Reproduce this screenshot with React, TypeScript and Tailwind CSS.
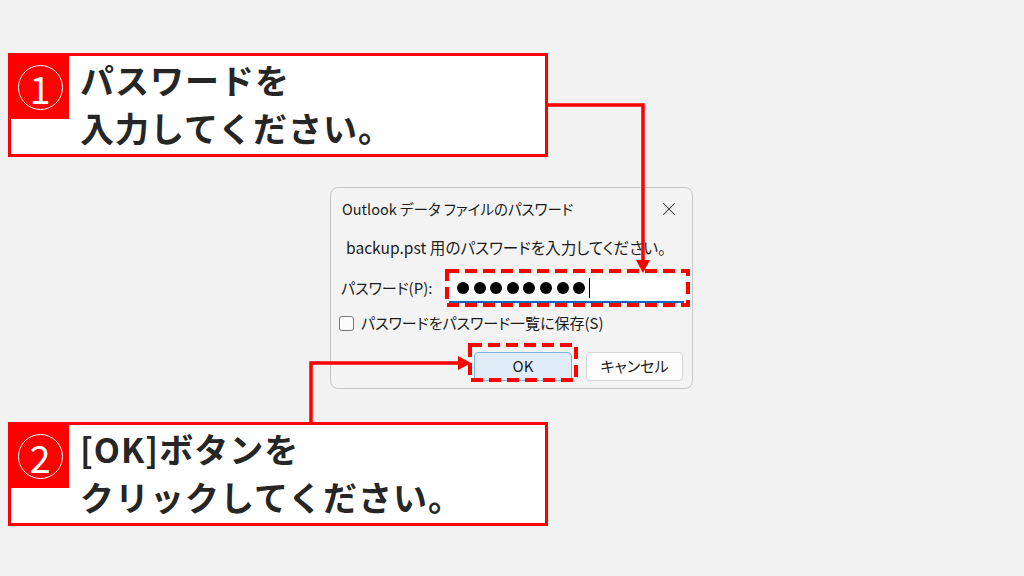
import { X } from "lucide-react";

const jp = "font-['Noto_Sans_CJK_JP',sans-serif]";

function Callout({ num, lines }: { num: string; lines: string[] }) {
  return (
    <div className="flex h-[104px] w-[540px] border-[3px] border-[#ff0000] bg-white">
      <div className="flex h-[63px] w-[58px] shrink-0 items-center justify-center bg-[#ff0000]">
        <div className="flex h-[45px] w-[45px] shrink-0 items-center justify-center rounded-full border-[1.5px] border-white">
          <span className={`${jp} text-[38px] leading-none font-normal text-white`}>{num}</span>
        </div>
      </div>
      <div className={`${jp} pl-[11px] text-[34px] leading-[48px] font-bold tracking-[1px] text-[#262626]`}>
        {lines.map((l) => (
          <div key={l}>{l}</div>
        ))}
      </div>
    </div>
  );
}

function Dialog() {
  return (
    <div
      className={`${jp} flex h-[202px] w-[363px] flex-col rounded-[8px] border border-[#c6c6c6] bg-[#f3f3f3] text-[15px] text-[#1b1b1b] [font-feature-settings:'palt']`}
    >
      <div className="flex h-[41px] shrink-0 items-center justify-between pr-[12px] pl-[11px]">
        <span className="text-[14.5px]">Outlook データ ファイルのパスワード</span>
        <X size={22} strokeWidth={1.1} className="text-[#333]" />
      </div>
      <div className="mt-[9px] flex h-[20px] items-center pl-[15px] text-[15.6px]">
        backup.pst 用のパスワードを入力してください。
      </div>
      <div className="mt-[16px] flex h-[29px] items-center pl-[10px]">
        <span className="w-[108px]">パスワード(P):</span>
        <div className="flex h-[29px] w-[235px] items-center gap-[4.6px] border-b-2 border-[#0067c0] bg-white pl-[8px]">
          {Array.from({ length: 8 }).map((_, i) => (
            <span key={i} className="h-[12px] w-[12px] rounded-full bg-black" />
          ))}
          <span className="ml-[-1px] h-[20px] w-px bg-black" />
        </div>
      </div>
      <div className="mt-[10px] flex h-[20px] items-center gap-[7px] pl-[8px]">
        <span className="h-[15px] w-[15px] rounded-[3px] border border-[#7a7a7a] bg-[#fbfbfb]" />
        <span>パスワードをパスワード一覧に保存(S)</span>
      </div>
      <div className="mt-[19px] flex justify-end gap-[14px] pr-[9px]">
        <button className="h-[29px] w-[98px] rounded-[4px] border border-[#7fb2e0] bg-[#e0edf8] text-[15px]">
          OK
        </button>
        <button className="h-[29px] w-[97px] rounded-[4px] border border-[#d5d5d5] bg-[#fdfdfd] text-[15px]">
          キャンセル
        </button>
      </div>
    </div>
  );
}

export default function App() {
  return (
    <div className="relative h-[576px] w-[1024px] overflow-hidden bg-[#f2f2f2]">
      <div className="flex flex-col pl-[8px]">
        <div className="mt-[53px]">
          <Callout num="1" lines={["パスワードを", "入力してください。"]} />
        </div>
        <div className="mt-[30px] ml-[322px]">
          <Dialog />
        </div>
        <div className="mt-[33px]">
          <Callout num="2" lines={["[OK]ボタンを", "クリックしてください。"]} />
        </div>
      </div>

      <svg className="pointer-events-none absolute inset-0" width="1024" height="576" viewBox="0 0 1024 576">
        <path d="M546 105 H643 V262" fill="none" stroke="#ff0000" strokeWidth="3.5" />
        <polygon points="636,260 650,260 643,273" fill="#ff0000" />
        <path d="M311 422 V363 H460" fill="none" stroke="#ff0000" strokeWidth="3.5" />
        <polygon points="458,356 458,370 471,363" fill="#ff0000" />
        <rect x="447" y="271" width="241" height="34" fill="none" stroke="#ff0000" strokeWidth="4" strokeDasharray="12 6" />
        <rect x="470" y="345" width="106" height="35" fill="none" stroke="#ff0000" strokeWidth="4" strokeDasharray="12 6" />
      </svg>
    </div>
  );
}
